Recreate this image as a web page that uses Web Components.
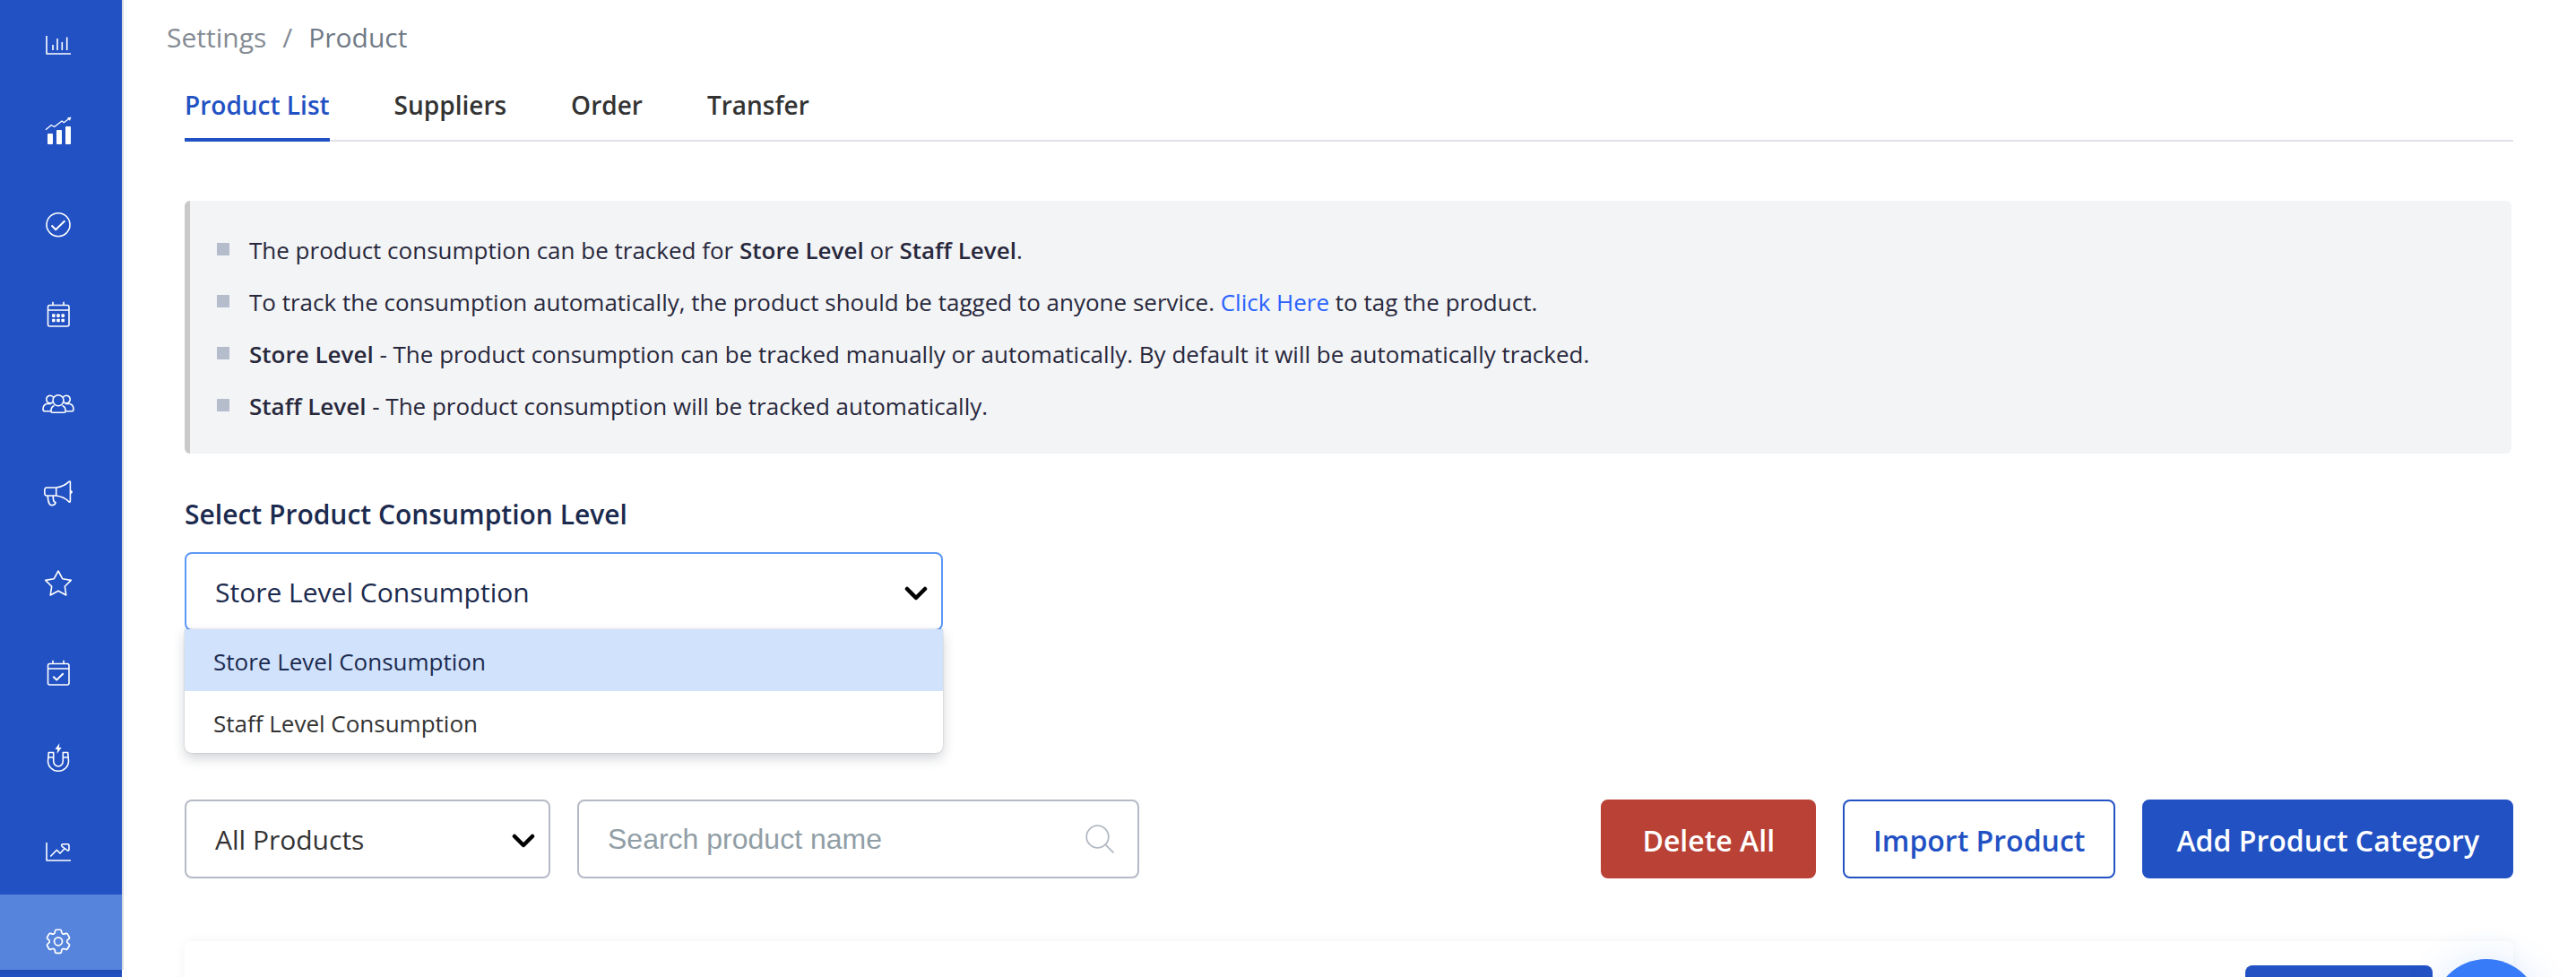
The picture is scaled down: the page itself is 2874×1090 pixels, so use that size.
<!DOCTYPE html>
<html lang="en">
<head>
<meta charset="utf-8">
<title>Settings / Product</title>
<style>
  body { margin: 0; background: #fff; font-family: "Open Sans", "Segoe UI", sans-serif; }
  notice-box b { font-weight: 600; }
  notice-box a { color: #2962ff; text-decoration: none; }
</style>
</head>
<body>
<app-shell>
  <side-nav slot="nav"></side-nav>
  <crumb-trail></crumb-trail>
  <tab-bar></tab-bar>
  <notice-box>
    <li>The product consumption can be tracked for <b>Store Level</b> or <b>Staff Level</b>.</li>
    <li>To track the consumption automatically, the product should be tagged to anyone service. <a href="#tag">Click Here</a> to tag the product.</li>
    <li><b>Store Level</b> - The product consumption can be tracked manually or automatically. By default it will be automatically tracked.</li>
    <li><b>Staff Level</b> - The product consumption will be tracked automatically.</li>
  </notice-box>
  <level-picker></level-picker>
  <product-toolbar></product-toolbar>
  <category-card></category-card>
  <chat-bubble slot="float"></chat-bubble>
</app-shell>

<script>
const define = (name, html) => customElements.define(name, class extends HTMLElement {
  constructor() {
    super();
    const t = document.createElement('template');
    t.innerHTML = '<style>:host,*{box-sizing:border-box}:host{display:block}</style>' + html;
    this.attachShadow({ mode: 'open' }).append(t.content.cloneNode(true));
  }
});

define('app-shell', `
<style>
  :host { display: flex; height: 100vh; overflow: hidden; position: relative; }
  main { flex: 1; min-width: 0; padding: 0 70px 0 68px; }
</style>
<slot name="nav"></slot>
<main><slot></slot></main>
<slot name="float"></slot>`);

const icons = [
  ['Dashboard', '<path d="M7 10V30H34M14 20v6M19 13v13M24.300 17v9M29.700 11.500v14.500"/>'],
  ['Sales', '<g transform="translate(0 -10)"><path stroke-width="1.300" d="M6 24.700l6-5 3.700 1.800 8.300-6.500 2.200 1.700 6-4.500"/><path fill="#fff" stroke="none" d="M29.800 11.500l4.700-1-1.500 4.200z"/><g fill="#fff" stroke="none"><rect x="8" y="29" width="6" height="12" rx="1"/><rect x="18" y="25" width="6" height="16" rx="1"/><rect x="28" y="21" width="6" height="20" rx="1"/></g></g>'],
  ['Tasks', '<circle cx="20" cy="20.700" r="13"/><path stroke-width="2" d="M12.500 21.500l4.700 4.700 10.200-9.900"/>'],
  ['Calendar', '<rect x="8.500" y="10.500" width="23.500" height="23.500" rx="2"/><path d="M8.500 16H32M14 6.700v4M26 6.700v4"/><g fill="#fff" stroke="none"><rect x="13" y="20.300" width="3.600" height="3.600" rx=".8"/><rect x="18.200" y="20.300" width="3.600" height="3.600" rx=".8"/><rect x="23.400" y="20.300" width="3.600" height="3.600" rx=".8"/><rect x="13" y="25.700" width="3.600" height="3.600" rx=".8"/><rect x="18.200" y="25.700" width="3.600" height="3.600" rx=".8"/><rect x="23.400" y="25.700" width="3.600" height="3.600" rx=".8"/></g>'],
  ['Customers', '<circle cx="20" cy="16.700" r="6"/><path d="M15.500 22.500c-2.500 1-3.500 3-3.500 5.500v1q0 1.300 1.300 1.300h13.400q1.300 0 1.300-1.300v-1c0-2.500-1-4.500-3.500-5.500M14 18.700A4.300 4.300 0 1 1 14.800 13.500M26 18.700A4.300 4.300 0 1 0 25.200 13.500M7 20.500c-3 1-4 3.500-4 6.200q0 2 2 2h7M33 20.500c3 1 4 3.500 4 6.200q0 2-2 2h-7M7 20.500h5.500M33 20.500h-5.500"/>'],
  ['Marketing', '<path d="M17.700 14H7q-2.200 0-2.200 3v3q0 3 2.200 3h10.700zM17.700 14c6-.8 11-3.500 14.200-6.600q1.500-1 1.500.7v21q0 1.700-1.500.7C28.700 26.500 23.700 23.800 17.700 23M8.300 23c0 4 .5 7 2 9.500 1.400 1.900 6.700 1.200 6.700-2l-1.500-.8c-1.500-1.500-1.200-4-1.200-6.700M34 17.800q2.400.9 0 2.400"/>'],
  ['Reviews', '<path d="M20 7l4.700 8.700 9.600 1.700-7 6.800 1.500 9.800-8.800-4.700-8.800 4.700 1.500-9.800-7-6.800 9.600-1.700z"/>'],
  ['Bookings', '<rect x="8.500" y="10.500" width="23.500" height="23.500" rx="2"/><path d="M8.500 16H32M14 6.700v4M26 6.700v4"/><path stroke-width="2" d="M14.300 24.700l3.900 3.900 7.500-7.300"/>'],
  ['Leads', '<path d="M9.300 9.500h5.400v9.500a5.300 6 0 0 0 10.600 0V9.500h5.400l.8 9.500a11.500 11.300 0 0 1-23 0zM9 15h5.700M25.300 15H31"/><path fill="#fff" stroke="none" d="M21.500-1l-5 7h2.800l-.8 5 5.200-7h-3z"/>'],
  ['Analytics', '<path d="M7 10V30H34M11.300 25.500l7-7.200 3.700 3.700 5-5.200M25 11.800h5.500q1.500 0 1.500 1.500v4.500q-.5 2-2 .8l-5.800-4.300q-1.400-1.800.8-2.500z"/>'],
  ['Settings', '<g transform="translate(2.600 2.900) scale(1.450)" stroke-width="1.200"><path d="M9.594 3.940c.09-.542.56-.94 1.110-.94h2.593c.55 0 1.020.398 1.110.94l.213 1.281c.063.374.313.686.645.87.074.04.147.083.22.127.325.196.72.257 1.075.124l1.217-.456a1.125 1.125 0 0 1 1.370.49l1.296 2.247a1.125 1.125 0 0 1-.26 1.431l-1.003.827c-.293.241-.438.613-.43.992a7.723 7.723 0 0 1 0 .255c-.008.378.137.75.43.991l1.004.827c.424.35.534.955.26 1.430l-1.298 2.247a1.125 1.125 0 0 1-1.369.491l-1.217-.456c-.355-.133-.75-.072-1.076.124a6.470 6.470 0 0 1-.22.128c-.331.183-.581.495-.644.869l-.213 1.281c-.09.543-.56.94-1.110.94h-2.594c-.55 0-1.019-.398-1.110-.94l-.213-1.281c-.062-.374-.312-.686-.644-.87a6.520 6.520 0 0 1-.22-.127c-.325-.196-.72-.257-1.076-.124l-1.217.456a1.125 1.125 0 0 1-1.369-.49l-1.297-2.247a1.125 1.125 0 0 1 .26-1.431l1.004-.827c.292-.24.437-.613.43-.991a6.932 6.932 0 0 1 0-.255c.007-.38-.138-.751-.43-.992l-1.004-.827a1.125 1.125 0 0 1-.26-1.430l1.297-2.247a1.125 1.125 0 0 1 1.370-.491l1.216.456c.356.133.751.072 1.076-.124.072-.044.146-.086.22-.128.332-.183.582-.495.644-.869l.214-1.280Z"/><circle cx="12" cy="12" r="3.100"/></g>']
];

define('side-nav', `
<style>
  :host { display: flex; flex-direction: column; flex: none; width: 138px; }
  nav { flex: 1; min-height: 0; overflow: hidden; background: #2251c3; border-right: 2px solid #d8dbe0; }
  ul { margin: -2px 0 0; padding: 0; list-style: none; }
  a { display: flex; align-items: center; justify-content: center; height: 100px; padding: 4px 6px 0 0; }
  a[aria-current] { height: 104px; padding-top: 0; background: #5684dc; }
  svg { display: block; width: 40px; height: 40px; overflow: visible; fill: none; stroke: #fff; stroke-width: 1.6px; stroke-linejoin: round; }
  footer { height: 8px; width: 136px; background: linear-gradient(#1f4db6, #2251c3); }
</style>
<nav aria-label="Main"><ul>${icons.map(([n, p], i) => `<li><a href="#${n.toLowerCase()}" aria-label="${n}"${i === 10 ? ' aria-current="page"' : ''}><svg viewBox="0 0 40 40" aria-hidden="true">${p}</svg></a></li>`).join('')}</ul></nav>
<footer></footer>`);

define('crumb-trail', `
<style>
  nav { display: flex; gap: 18px; height: 84px; margin-left: -20px; align-items: center; font-size: 30px; line-height: 42px; color: #848b94; }
  a { color: inherit; text-decoration: none; }
  [aria-current] { color: #6f7a86; }
</style>
<nav aria-label="Breadcrumb"><a href="#settings">Settings</a><span>/</span><a href="#product" aria-current="page">Product</a></nav>`);

define('tab-bar', `
<style>
  nav { display: flex; gap: 72px; height: 74px; box-shadow: inset 0 -2px #dfe1e8; }
  a { display: block; padding-top: 13px; font-size: 28px; line-height: 40px; font-weight: 600; color: #333; text-decoration: none; }
  a[aria-current] { color: #2251c3; border-bottom: 4px solid #2251c3; }
</style>
<nav aria-label="Product settings"><a href="#list" aria-current="page">Product List</a><a href="#suppliers">Suppliers</a><a href="#order">Order</a><a href="#transfer">Transfer</a></nav>`);

define('notice-box', `
<style>
  :host { margin-top: 66px; margin-right: 2px; }
  ul { margin: 0; padding: 26px 30px 24px; list-style: none; background: #f3f4f6; border-left: 6px solid #c9c9c9; border-radius: 6px; }
  ::slotted(li) { display: block; padding-left: 36px; font-size: 26px; line-height: 58px; color: #28283c;
    background: linear-gradient(#b5bccb, #b5bccb) 0 21px / 14px 14px no-repeat; }
</style>
<ul><slot></slot></ul>`);

const chevron = '<svg viewBox="0 0 26 16" aria-hidden="true"><path d="M3 3l10 10L23 3" fill="none" stroke="#000" stroke-width="4.500" stroke-linecap="round" stroke-linejoin="round"/></svg>';

define('level-picker', `
<style>
  :host { margin-top: 46px; width: 846px; position: relative; }
  label { display: block; font-size: 30px; line-height: 44px; font-weight: 600; color: #1b2a4e; }
  .box { display: grid; margin-top: 20px; align-items: center; }
  .box > * { grid-area: 1 / 1; }
  select { appearance: none; width: 100%; height: 88px; padding: 0 32px; border: 2px solid #5c98f5; border-radius: 8px; background: #fff; font: 30px "Open Sans", sans-serif; color: #1b2a4e; outline: 0; }
  svg { width: 26px; height: 16px; justify-self: end; margin: 4px 17px 0 0; pointer-events: none; }
  ul { position: absolute; top: 150px; left: 0; right: 0; margin: 0; padding: 0; list-style: none; background: #fff; border-radius: 0 0 8px 8px; box-shadow: 0 6px 14px rgba(30,40,60,.2), 0 0 2px rgba(30,40,60,.25); overflow: hidden; }
  li { padding: 3px 32px 0; font-size: 26px; line-height: 66px; color: #333; }
  li[aria-selected=true] { background: #d1e2fd; color: #1b2a4e; }
</style>
<label for="level">Select Product Consumption Level</label>
<div class="box"><select id="level"><option>Store Level Consumption</option><option>Staff Level Consumption</option></select>${chevron}</div>
<ul role="listbox" aria-label="Consumption level"><li role="option" aria-selected="true">Store Level Consumption</li><li role="option" aria-selected="false">Staff Level Consumption</li></ul>`);

define('product-toolbar', `
<style>
  :host { display: flex; gap: 30px; margin-top: 188px; }
  .filter, .search { display: grid; align-items: center; }
  .filter { width: 408px; }
  .search { width: 627px; }
  .filter > *, .search > * { grid-area: 1 / 1; }
  select, input { width: 100%; height: 88px; border: 2px solid #b5bac6; border-radius: 8px; background: #fff; outline: 0; }
  select { appearance: none; padding: 0 32px; font: 30px "Open Sans", sans-serif; color: #333; }
  input { padding: 0 80px 0 32px; font: 32px "Liberation Sans", Arial, sans-serif; color: #333; }
  input::placeholder { color: #919ea6; opacity: 1; }
  svg { width: 26px; height: 16px; justify-self: end; margin: 4px 17px 0 0; pointer-events: none; }
  .search svg { width: 32px; height: 32px; margin: 0 28px 0 0; }
  .actions { display: flex; gap: 30px; margin-left: auto; }
  button { height: 88px; padding: 2px 36px 0; border: 2px solid #2251c3; border-radius: 8px; background: #2251c3; color: #fff; font: 600 32px "Open Sans", sans-serif; white-space: nowrap; }
  .danger { padding: 2px 44px 0; background: #b94135; border-color: #b94135; }
  .outline { padding: 2px 32px 0; background: #fff; color: #2251c3; }
</style>
<div class="filter"><select aria-label="Product filter"><option>All Products</option></select>${chevron}</div>
<div class="search"><input type="text" aria-label="Search product name" placeholder="Search product name"><svg viewBox="0 0 32 32" aria-hidden="true"><g fill="none" stroke="#b3bac3" stroke-width="1.800"><circle cx="13.500" cy="13.500" r="12.300"/><path d="M22.500 22.500l9 9"/></g></svg></div>
<div class="actions"><button class="danger">Delete All</button><button class="outline">Import Product</button><button>Add Product Category</button></div>`);

define('category-card', `
<style>
  section { display: flex; justify-content: flex-end; margin-top: 70px; padding: 27px 90px; min-height: 300px; border-radius: 8px; background: #fff; box-shadow: 0 0 14px rgba(0,0,0,.05); }
  button { width: 209px; height: 72px; border: 0; border-radius: 8px; background: #2251c3; }
</style>
<section><button aria-label="Add product"></button></section>`);

define('chat-bubble', `
<style>
  :host { position: absolute; right: 40px; bottom: -100px; }
  button { display: block; width: 120px; height: 120px; border: 0; border-radius: 50%; background: #377bf8; box-shadow: 0 0 40px rgba(55,123,248,.16); }
</style>
<button aria-label="Open chat"></button>`);
</script>
</body>
</html>
